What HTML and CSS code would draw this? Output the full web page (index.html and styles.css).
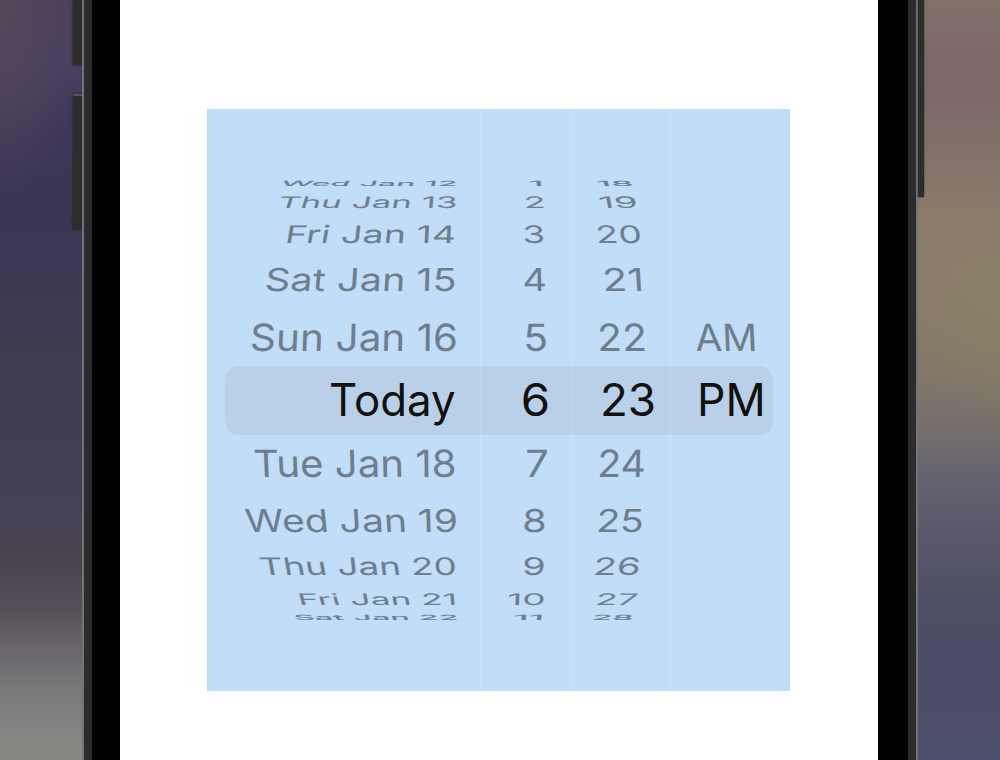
FILE: index.html
```html
<!DOCTYPE html>
<html lang="en">
<head>
  <meta charset="UTF-8" />
  <meta name="viewport" content="width=device-width, initial-scale=1.0"/>
  <title>Date Picker</title>
  <link rel="stylesheet" href="styles.css">
</head>
<body>
  <div class="backdrop backdrop-left">
    <div class="key key-up"></div>
    <div class="key key-down"></div>
  </div>
  <div class="phone">
    <div class="screen">
      <div class="picker" id="picker">
        <div class="selection"></div>
      </div>
    </div>
  </div>
  <div class="backdrop backdrop-right">
    <div class="key key-power"></div>
  </div>

  <script src="script.js"></script>
</body>
</html>
```
FILE: styles.css
```css
:root {
  --panel: #c2ddf8;
  --muted: #6d7f8f;
  --frame: #2c2c2c;
}

body {
  margin: 0;
  width: 1000px;
  height: 760px;
  display: flex;
  overflow: hidden;
  font-family: Inter, sans-serif;
}

.backdrop {
  height: 760px;
  box-sizing: border-box;
}

.backdrop-left {
  width: 82px;
  display: flex;
  flex-direction: column;
  align-items: flex-end;
  background:
    radial-gradient(ellipse 85px 190px at 0 10px, rgba(84, 72, 88, 0.95), rgba(84, 72, 88, 0)),
    linear-gradient(#4a3e5e 0, #483e60 60px, #3f3758 130px, #3a3553 200px, #3a3753 260px, #3f3c51 340px, #413e52 430px, #444154 510px, #4a424e 565px, #575059 610px, #676369 645px, #7b7a7b 695px, #868684 740px, #868683 760px);
}

.backdrop-right {
  width: 82px;
  background:
    radial-gradient(ellipse 90px 110px at 82px 320px, rgba(138, 132, 98, 0.45), rgba(138, 132, 98, 0)),
    linear-gradient(#84716a 0, #7d6867 60px, #7e6968 95px, #84726a 160px, #8a7a6a 210px, #8a7d6b 270px, #887b69 320px, #82776a 370px, #77706b 420px, #656370 475px, #58576a 540px, #4e4e64 610px, #4b4c66 660px, #4d506c 760px);
}

.key {
  background: var(--frame);
  box-shadow: 0 0 2px rgba(0, 0, 0, 0.6);
}

.key-up {
  width: 9px;
  height: 65px;
}

.key-down {
  width: 9px;
  height: 133px;
  margin-top: 29px;
  border-top: 2px solid #555;
}

.key-power {
  width: 6px;
  height: 197px;
}

.phone {
  width: 836px;
  height: 760px;
  box-sizing: border-box;
  display: flex;
  padding-left: 36px;
  border: solid #747474;
  border-width: 0 2px;
  background: linear-gradient(to right, var(--frame) 8px, #000 8px, #000 824px, var(--frame) 824px);
}

.screen {
  width: 758px;
  box-sizing: border-box;
  padding: 109px 0 0 87px;
  background: #fff;
  display: flex;
  align-items: flex-start;
}

.picker {
  position: relative;
  display: flex;
  width: 583px;
  height: 582px;
  background: var(--panel);
}

/* band behind the chosen row */
.selection {
  position: absolute;
  left: 18px;
  right: 17px;
  top: 257px;
  height: 69px;
  border-radius: 14px;
  background: #b9d0e8;
}

.column {
  position: relative;
  box-sizing: border-box;
  display: flex;
  flex-direction: column;
  justify-content: center;
  border-left: 1px solid rgba(255, 255, 255, 0.15);
}

.column:nth-child(2) { width: 273px; border-left: none; }
.column:nth-child(3) { width: 91px; }
.column:nth-child(4) { width: 99px; }
.column:nth-child(5) { width: 120px; }

.row {
  display: flex;
  align-items: center;
  color: var(--muted);
}

.level-0 { height: 69px; color: #111; }
.level-1 { height: 57.5px; }
.level-2 { height: 57px; }
.level-3 { height: 34.5px; }
.level-4 { height: 30px; }
.level-5 { height: 7px; font-weight: 500; }

.label {
  display: flex;
  gap: 0.28em;
  font-size: 44.5px;
  line-height: 54px;
  white-space: nowrap;
  transform-origin: 0 50%;
}
```
FILE: script.js
```javascript
const picker = document.getElementById('picker');
const fontSize = 44.5;
const ctx = document.createElement('canvas').getContext('2d');

// vertical squash and tilt of the drum, by distance from the chosen row
const squash = [1, 0.845, 0.71, 0.545, 0.355, 0.16];
const tilt = [0, 0.0002, 0.0005, 0.0009, 0.0016, 0.003];
const center = 290;
const gap = 0.28 * fontSize;

// [label, left edge, right edge] inside the picker
const columns = [
  { x: 0, rows: [
    ['Wed Jan 12', 75, 248.5], ['Thu Jan 13', 73, 248.5], ['Fri Jan 14', 81, 247.5],
    ['Sat Jan 15', 59.5, 247], ['Sun Jan 16', 44.5, 248], ['Today', 123.5, 247],
    ['Tue Jan 18', 47.5, 247], ['Wed Jan 19', 38.5, 248.5], ['Thu Jan 20', 54, 248],
    ['Fri Jan 21', 93, 247.5], ['Sat Jan 22', 88, 249.5]
  ] },
  { x: 273, rows: [
    ['1', 322.5, 333.5], ['2', 318.5, 335.5], ['3', 317, 336],
    ['4', 316.5, 338], ['5', 319, 339], ['6', 316, 340.5],
    ['7', 319.5, 340], ['8', 317, 337.5], ['9', 317, 336.5],
    ['10', 301.5, 336.5], ['11', 307.5, 334]
  ] },
  { x: 364, rows: [
    ['18', 391, 424.5], ['19', 392.5, 428], ['20', 391, 433],
    ['21', 397.5, 433.5], ['22', 392.5, 436.5], ['23', 396, 446.5],
    ['24', 392.5, 437], ['25', 392, 435], ['26', 389, 431.5],
    ['27', 391, 430], ['28', 386.5, 424.5]
  ] },
  { x: 463, rows: [
    null, null, null, null, ['AM', 489, 547.5], ['PM', 492.5, 555],
    null, null, null, null, null
  ] }
];

columns.forEach(col => {
  const el = document.createElement('div');
  el.className = 'column';
  col.rows.forEach((item, i) => {
    const row = document.createElement('div');
    row.className = 'row level-' + Math.abs(i - 5);
    if (item) row.appendChild(makeLabel(item, col.x, i - 5));
    el.appendChild(row);
  });
  picker.appendChild(el);
});

function makeLabel([text, left, right], colX, offset) {
  const level = Math.abs(offset);
  const lean = Math.sign(offset) * tilt[level];
  ctx.font = (level === 5 ? '500 ' : '400 ') + fontSize + 'px Inter';
  const words = text.split(' ');
  const sizes = words.map(w => ctx.measureText(w));
  const last = sizes[sizes.length - 1];
  const bearing = sizes[0].actualBoundingBoxLeft;
  const total = sizes.reduce((sum, m) => sum + m.width + gap, -gap);
  const ink = total - last.width + last.actualBoundingBoxRight + bearing;
  const sx = (right - left) / ink;
  const sy = squash[level];

  const label = document.createElement('div');
  label.className = 'label';
  label.style.marginLeft = (left - colX - (colX ? 1 : 0)) + 'px';
  label.style.transform = `scale(${sx}, ${sy}) translateX(${bearing}px)`;

  // every word leans towards the middle of the drum
  let x = 0;
  words.forEach((word, i) => {
    const span = document.createElement('span');
    const mid = left + (x + sizes[i].width / 2) * sx;
    const slope = -lean * (mid - center) * sy / sx;
    span.textContent = word;
    if (slope) span.style.transform = `skewX(${Math.atan(slope)}rad)`;
    label.appendChild(span);
    x += sizes[i].width + gap;
  });
  return label;
}
```
